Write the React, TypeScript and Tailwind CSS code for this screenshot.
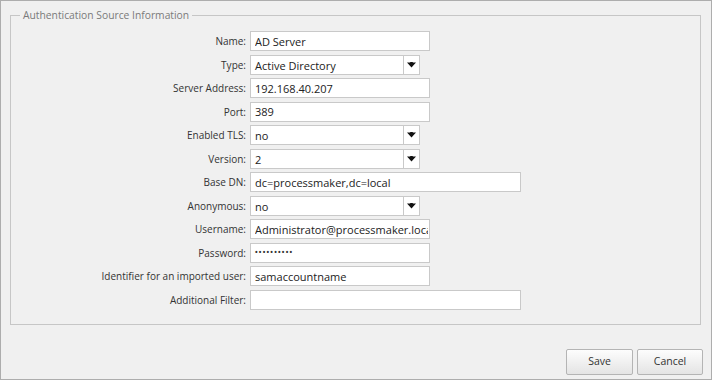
import React from 'react';

type Field = {
  label: string;
  value: string;
  kind: 'text' | 'select' | 'password';
  width: string;
};

const fields: Field[] = [
  { label: 'Name:', value: 'AD Server', kind: 'text', width: 'w-[180px]' },
  { label: 'Type:', value: 'Active Directory', kind: 'select', width: 'w-[170px]' },
  { label: 'Server Address:', value: '192.168.40.207', kind: 'text', width: 'w-[180px]' },
  { label: 'Port:', value: '389', kind: 'text', width: 'w-[180px]' },
  { label: 'Enabled TLS:', value: 'no', kind: 'select', width: 'w-[170px]' },
  { label: 'Version:', value: '2', kind: 'select', width: 'w-[170px]' },
  { label: 'Base DN:', value: 'dc=processmaker,dc=local', kind: 'text', width: 'w-[271px]' },
  { label: 'Anonymous:', value: 'no', kind: 'select', width: 'w-[170px]' },
  { label: 'Username:', value: 'Administrator@processmaker.local', kind: 'text', width: 'w-[180px]' },
  { label: 'Password:', value: '••••••••••', kind: 'password', width: 'w-[180px]' },
  { label: 'Identifier for an imported user:', value: 'samaccountname', kind: 'text', width: 'w-[180px]' },
  { label: 'Additional Filter:', value: '', kind: 'text', width: 'w-[271px]' },
];

// small bold chevron used by the combo boxes
const Caret = () => (
  <svg width="9" height="6" viewBox="0 0 9 6">
    <path d="M0 0.4 L9 0.4 L4.5 5.6 Z M3 0 L6 0 L4.5 1.8 Z" fill="#111" />
  </svg>
);

const Control: React.FC<{ f: Field }> = ({ f }) => {
  const box = `${f.width} h-[20px] border border-[#c9c9c9] bg-white`;
  if (f.kind === 'select') {
    return (
      <div className={`${box} flex items-stretch`}>
        <div className="flex-1 pl-[4px] text-[11px] leading-[19px] text-[#222]">{f.value}</div>
        <div className="w-[16px] border-l border-[#c9c9c9] flex items-center justify-center">
          <Caret />
        </div>
      </div>
    );
  }
  if (f.kind === 'password') {
    return (
      <div className={`${box} pl-[4px] text-[7px] font-bold leading-[18px] tracking-[1.2px] text-[#333]`}>{f.value}</div>
    );
  }
  return (
    <input
      readOnly
      defaultValue={f.value}
      className={`${box} pl-[4px] pr-[1px] text-[11px] text-[#222] outline-none font-['Open_Sans',sans-serif]`}
    />
  );
};

const App: React.FC = () => {
  return (
    <div className="w-[712px] h-[380px] border border-[#adadad] bg-[#f0f0f0] font-['Open_Sans',sans-serif] flex flex-col">
      <fieldset className="ml-[9px] mt-[7px] w-[691px] h-[317px] border border-[#c6c6c6]">
        <legend className="ml-[9px] px-[3px] text-[10.3px] leading-[15px] text-[#7a7a7a]">
          Authentication Source Information
        </legend>
        <div className="mt-[8px] grid grid-cols-[235px_1fr] gap-x-[4px] gap-y-[3.5px]">
          {fields.map((f) => (
            <React.Fragment key={f.label}>
              <div className="h-[20px] text-right text-[10px] leading-[20px] text-[#333]">{f.label}</div>
              <Control f={f} />
            </React.Fragment>
          ))}
        </div>
      </fieldset>
      <div className="mt-auto mb-[4px] mr-[8px] flex justify-end gap-[4px]">
        <button className="w-[67px] h-[26px] border border-[#b4b4b4] rounded-[2px] bg-gradient-to-b from-[#fdfdfd] to-[#e4e4e4] text-[10.5px] text-[#333]">
          Save
        </button>
        <button className="w-[66px] h-[26px] border border-[#b4b4b4] rounded-[2px] bg-gradient-to-b from-[#fdfdfd] to-[#e4e4e4] text-[10.5px] text-[#333]">
          Cancel
        </button>
      </div>
    </div>
  );
};

export default App;
